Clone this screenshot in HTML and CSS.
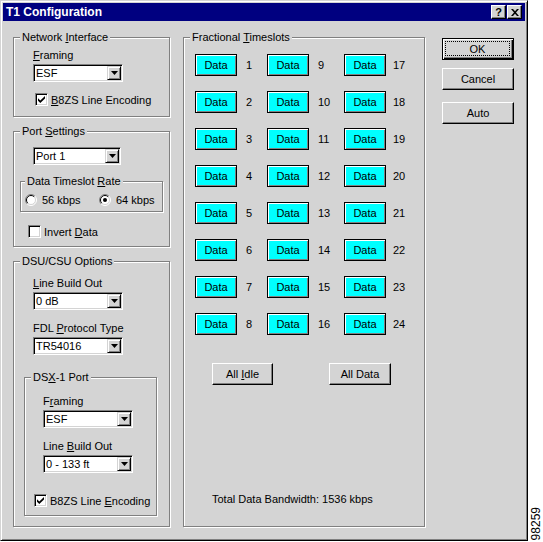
FILE: index.html
```html
<!DOCTYPE html>
<html>
<head>
<meta charset="utf-8">
<link rel="stylesheet" href="styles.css">
</head>
<body>
<div class="page">
  <div class="window">
    <div class="titlebar">
      <span class="title">T1 Configuration</span>
      <div class="tbtns">
        <span class="tbtn"><b class="q">?</b></span>
        <span class="tbtn"><svg width="8" height="7" viewBox="0 0 8 7"><path d="M0 0h2l2 2.2L6 0h2L5 3.5 8 7H6L4 4.8 2 7H0l3-3.5z" fill="#000"/></svg></span>
      </div>
    </div>
    <div class="content">
      <div class="col-left">
        <div class="group g-ni">
          <span class="legend">Network <u>I</u>nterface</span>
          <div class="lbl ind"><u>F</u>raming</div>
          <div class="combo ind w90 mt2"><span class="val">ESF</span><span class="drop"><svg width="7" height="4" viewBox="0 0 7 4"><path d="M0 0h7L3.5 4z" fill="#000"/></svg></span></div>
          <div class="check ni-check">
            <span class="cb"><svg width="7" height="7" viewBox="0 0 7 7"><path d="M0 2.3L2.3 4.6 7 0v2.4L2.3 7 0 4.7z" fill="#000"/></svg></span>
            <span><u>B</u>8ZS Line Encoding</span>
          </div>
        </div>

        <div class="group g-ps">
          <span class="legend">Port <u>S</u>ettings</span>
          <div class="combo ind w88"><span class="val">Port 1</span><span class="drop"><svg width="7" height="4" viewBox="0 0 7 4"><path d="M0 0h7L3.5 4z" fill="#000"/></svg></span></div>
          <div class="group g-rate">
            <span class="legend lg4">Data Timeslot <u>R</u>ate</span>
            <div class="radios">
              <div class="radio">
                <svg width="12" height="12" viewBox="0 0 12 12"><circle cx="6" cy="6" r="5" fill="#fff"/><path d="M9.9 2.1A5.5 5.5 0 0 0 2.1 9.9" fill="none" stroke="#808080"/><path d="M2.1 9.9A5.5 5.5 0 0 0 9.9 2.1" fill="none" stroke="#fff"/><path d="M9.2 2.8A4.5 4.5 0 0 0 2.8 9.2" fill="none" stroke="#000"/><path d="M2.8 9.2A4.5 4.5 0 0 0 9.2 2.8" fill="none" stroke="#d4d4d4"/></svg>
                <span>56 kbps</span>
              </div>
              <div class="radio">
                <svg width="12" height="12" viewBox="0 0 12 12"><circle cx="6" cy="6" r="5" fill="#fff"/><path d="M9.9 2.1A5.5 5.5 0 0 0 2.1 9.9" fill="none" stroke="#808080"/><path d="M2.1 9.9A5.5 5.5 0 0 0 9.9 2.1" fill="none" stroke="#fff"/><path d="M9.2 2.8A4.5 4.5 0 0 0 2.8 9.2" fill="none" stroke="#000"/><path d="M2.8 9.2A4.5 4.5 0 0 0 9.2 2.8" fill="none" stroke="#d4d4d4"/><circle cx="6" cy="6" r="2" fill="#000"/></svg>
                <span>64 kbps</span>
              </div>
            </div>
          </div>
          <div class="check inv-check">
            <span class="cb"></span>
            <span>Invert <u>D</u>ata</span>
          </div>
        </div>

        <div class="group g-dsu">
          <span class="legend">DSU/CSU Options</span>
          <div class="lbl ind"><u>L</u>ine Build Out</div>
          <div class="combo ind w90 mt2"><span class="val">0 dB</span><span class="drop"><svg width="7" height="4" viewBox="0 0 7 4"><path d="M0 0h7L3.5 4z" fill="#000"/></svg></span></div>
          <div class="lbl ind mt12">FDL <u>P</u>rotocol Type</div>
          <div class="combo ind w90 mt2"><span class="val">TR54016</span><span class="drop"><svg width="7" height="4" viewBox="0 0 7 4"><path d="M0 0h7L3.5 4z" fill="#000"/></svg></span></div>
          <div class="group g-dsx">
            <span class="legend">DS<u>X</u>-1 Port</span>
            <div class="lbl ind9">F<u>r</u>aming</div>
            <div class="combo ind9 w90 mt2"><span class="val">ESF</span><span class="drop"><svg width="7" height="4" viewBox="0 0 7 4"><path d="M0 0h7L3.5 4z" fill="#000"/></svg></span></div>
            <div class="lbl ind9 mt12">Line <u>B</u>uild Out</div>
            <div class="combo ind9 w90 mt2"><span class="val">0 - 133 ft</span><span class="drop"><svg width="7" height="4" viewBox="0 0 7 4"><path d="M0 0h7L3.5 4z" fill="#000"/></svg></span></div>
            <div class="check dsx-check">
              <span class="cb"><svg width="7" height="7" viewBox="0 0 7 7"><path d="M0 2.3L2.3 4.6 7 0v2.4L2.3 7 0 4.7z" fill="#000"/></svg></span>
              <span>B8ZS Line <u>E</u>ncoding</span>
            </div>
          </div>
        </div>
      </div>

      <div class="group g-ts">
        <span class="legend">Fractional <u>T</u>imeslots</span>
        <div class="slots">
          <span class="data">Data</span><span class="num">1</span><span class="data">Data</span><span class="num">9</span><span class="data">Data</span><span class="num n3">17</span>
          <span class="data">Data</span><span class="num">2</span><span class="data">Data</span><span class="num">10</span><span class="data">Data</span><span class="num n3">18</span>
          <span class="data">Data</span><span class="num">3</span><span class="data">Data</span><span class="num">11</span><span class="data">Data</span><span class="num n3">19</span>
          <span class="data">Data</span><span class="num">4</span><span class="data">Data</span><span class="num">12</span><span class="data">Data</span><span class="num n3">20</span>
          <span class="data">Data</span><span class="num">5</span><span class="data">Data</span><span class="num">13</span><span class="data">Data</span><span class="num n3">21</span>
          <span class="data">Data</span><span class="num">6</span><span class="data">Data</span><span class="num">14</span><span class="data">Data</span><span class="num n3">22</span>
          <span class="data">Data</span><span class="num">7</span><span class="data">Data</span><span class="num">15</span><span class="data">Data</span><span class="num n3">23</span>
          <span class="data">Data</span><span class="num">8</span><span class="data">Data</span><span class="num">16</span><span class="data">Data</span><span class="num n3">24</span>
        </div>
        <div class="actions">
          <span class="btn b-idle"><span>All <u>I</u>dle</span></span>
          <span class="btn b-all"><span>All Data</span></span>
        </div>
        <div class="total">Total Data Bandwidth: 1536 kbps</div>
      </div>

      <div class="col-right">
        <span class="btn default"><span class="focus">OK</span></span>
        <span class="btn b-cancel">Cancel</span>
        <span class="btn b-auto">Auto</span>
      </div>
    </div>
  </div>
  <div class="side"><span class="fig">98259</span></div>
</div>
</body>
</html>
```

FILE: styles.css
```css
* { box-sizing: border-box; }
html, body { margin: 0; padding: 0; }
body {
  background: #fff;
  font-family: "Liberation Sans", Arial, sans-serif;
  font-size: 11px;
  color: #000;
}
u { text-decoration: underline; text-underline-offset: 1px; }

.page { display: flex; width: 543px; height: 542px; }

.window {
  width: 528px;
  height: 541px;
  background: #d4d4d4;
  border: 1px solid;
  border-color: #d4d4d4 #000 #000 #d4d4d4;
  box-shadow: inset 1px 1px #fff, inset -1px -1px #808080;
  padding: 2px;
  display: flex;
  flex-direction: column;
}

.titlebar {
  height: 18px;
  background: #000080;
  display: flex;
  align-items: center;
  padding: 0 3px;
}
.title { flex: 1; color: #fff; font-weight: bold; font-size: 12px; line-height: 18px; }
.tbtns { display: flex; gap: 1px; }
.tbtn {
  width: 15px;
  height: 14px;
  background: #d4d4d4;
  border: 1px solid;
  border-color: #fff #000 #000 #fff;
  box-shadow: inset -1px -1px #808080;
  display: flex;
  align-items: center;
  justify-content: center;
}
.q { font-size: 11px; line-height: 11px; font-weight: bold; }

.content { flex: 1; display: flex; padding: 16px 0 0 10px; }

.col-left { width: 157px; margin-right: 13px; display: flex; flex-direction: column; gap: 14px; }

.group {
  position: relative;
  border: 1px solid #808080;
  box-shadow: inset 1px 1px #fff, 1px 1px #fff;
  padding: 0 6px;
}
.legend {
  position: absolute;
  top: -7px;
  left: 6px;
  padding: 0 2px;
  background: #d4d4d4;
  line-height: 13px;
  white-space: nowrap;
}
.lg4 { left: 4px; }

.lbl { height: 13px; line-height: 13px; white-space: nowrap; }
.ind { margin-left: 13px; }
.ind9 { margin-left: 9px; }
.mt2 { margin-top: 2px; }
.mt12 { margin-top: 12px; }
.w90 { width: 90px; }
.w88 { width: 88px; }

.combo {
  display: flex;
  height: 18px;
  background: #fff;
  border: 1px solid;
  border-color: #808080 #fff #fff #808080;
  box-shadow: inset 1px 1px #000, inset -1px -1px #d4d4d4;
  padding: 1px;
}
.combo .val { flex: 1; padding-left: 1px; line-height: 14px; white-space: nowrap; }
.drop {
  width: 14px;
  background: #d4d4d4;
  border: 1px solid;
  border-color: #d4d4d4 #000 #000 #d4d4d4;
  box-shadow: inset 1px 1px #fff, inset -1px -1px #808080;
  display: flex;
  align-items: center;
  justify-content: center;
}

.check { display: flex; align-items: center; gap: 3px; height: 13px; white-space: nowrap; }
.cb {
  width: 13px;
  height: 13px;
  flex: none;
  background: #fff;
  border: 1px solid;
  border-color: #808080 #fff #fff #808080;
  box-shadow: inset 1px 1px #000, inset -1px -1px #d4d4d4;
  display: flex;
  align-items: center;
  justify-content: center;
}

.g-ni { height: 80px; padding-top: 11px; }
.ni-check { margin-top: 11px; margin-left: 15px; }

.g-ps { height: 116px; padding-top: 15px; }
.g-rate { height: 31px; margin-top: 16px; padding: 12px 4px 0; }
.radios { display: grid; grid-template-columns: 74px auto; }
.radio { display: flex; align-items: center; gap: 5px; height: 12px; white-space: nowrap; }
.radio svg { flex: none; }
.inv-check { margin-top: 13px; margin-left: 8px; }

.g-dsu { height: 266px; padding-top: 15px; }
.g-dsx { height: 139px; margin: 22px 6px 0 4px; padding: 17px 0 0 9px; }
.dsx-check { margin-top: 21px; }

.g-ts {
  width: 242px;
  height: 490px;
  display: flex;
  flex-direction: column;
  padding: 16px 0 20px 11px;
}
.slots {
  display: grid;
  grid-template-columns: 42px 30px 42px 35px 42px 1fr;
  grid-auto-rows: 22px;
  row-gap: 15px;
}
.data {
  display: flex;
  align-items: center;
  justify-content: center;
  background: #00ffff;
  border: 1px solid #000;
  box-shadow: inset 1px 1px #fff, inset -1px -1px #808080;
}
.num { padding-left: 9px; line-height: 22px; }
.n3 { padding-left: 7px; }

.btn {
  display: flex;
  align-items: center;
  justify-content: center;
  height: 22px;
  background: #d4d4d4;
  border: 1px solid;
  border-color: #fff #000 #000 #fff;
  box-shadow: inset -1px -1px #808080;
  white-space: nowrap;
}
.actions { display: flex; margin-top: 28px; padding-left: 17px; gap: 56px; }
.b-idle { width: 61px; }
.b-all { width: 62px; }
.total { margin-top: auto; padding-left: 17px; line-height: 13px; white-space: nowrap; }

.col-right { width: 72px; margin-left: 17px; display: flex; flex-direction: column; padding-top: 1px; }
.default {
  border: 1px solid #000;
  box-shadow: inset 1px 1px #fff, inset -1px -1px #000, inset -2px -2px #808080;
  align-items: stretch;
  justify-content: stretch;
}
.focus {
  flex: 1;
  margin: 2px 3px 3px 2px;
  border: 1px dotted #000;
  display: flex;
  align-items: center;
  justify-content: center;
}
.b-cancel { margin-top: 8px; }
.b-auto { margin-top: 12px; }

.side {
  flex: 1;
  display: flex;
  flex-direction: column;
  justify-content: flex-end;
  align-items: center;
  padding-bottom: 2px;
}
.fig { writing-mode: vertical-rl; transform: rotate(180deg); font-size: 12px; line-height: 12px; }
```
